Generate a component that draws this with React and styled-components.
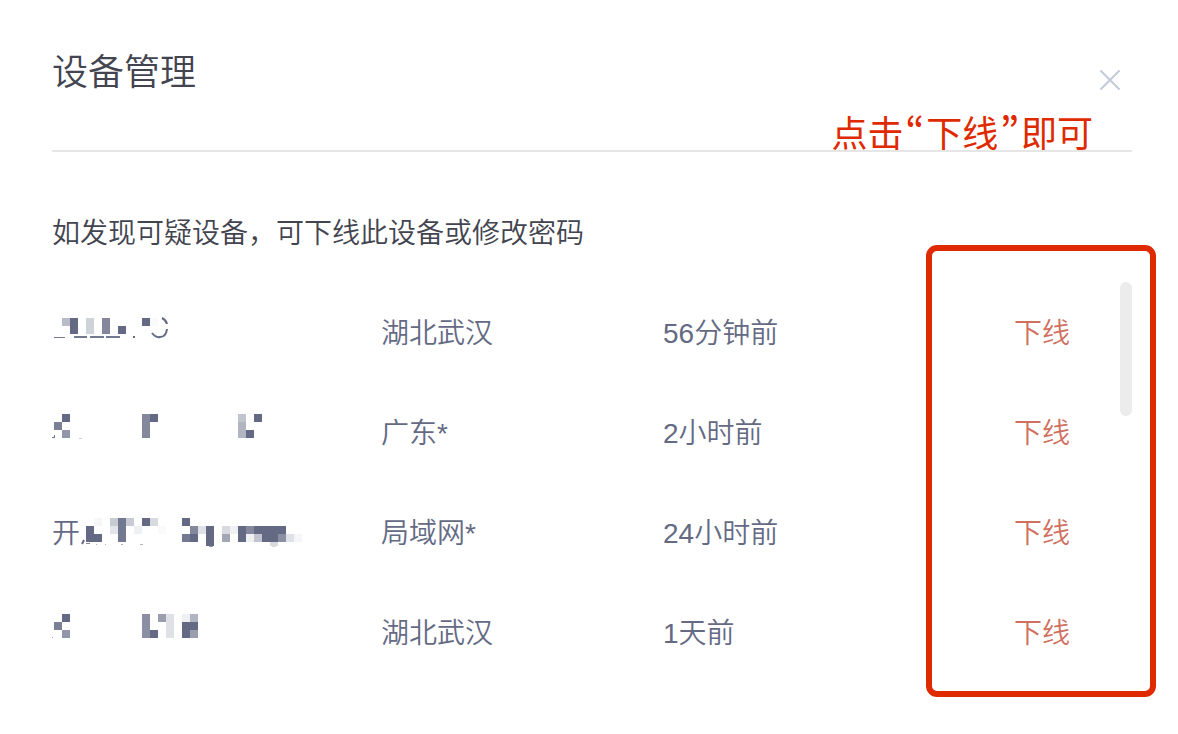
import React from 'react'
import styled, { createGlobalStyle } from 'styled-components'

const colors = {
    INK: '#42444f',
    SLATE: '#646a84',
    CORAL: '#d0705f',
    RED: '#df2a00',
    LINE: '#e6e6e6',
    THUMB: '#ececec',
    CLOSE: '#c3cbd9'
}

const GlobalStyle = createGlobalStyle`
    * {
        box-sizing: border-box;
    }
    body {
        margin: 0;
        background: #fff;
        color: ${colors.INK};
        font-family: "Liberation Sans", "Noto Sans CJK SC", sans-serif;
        font-size: 28px;
        font-weight: 350;
        line-height: 40px;
    }
`

const Dialog = styled.main`
    padding: 48px 46px 52px 52px;
`

const Header = styled.header`
    position: relative;
    display: flex;
    justify-content: space-between;
    align-items: flex-start;
    height: 104px;
    border-bottom: 2px solid ${colors.LINE};
`

const Title = styled.h1`
    margin: 0;
    font-size: 36px;
    font-weight: inherit;
    line-height: 50px;
`

const CloseButton = styled.button`
    display: flex;
    margin-top: 20px;
    padding: 0 10px;
    border: 0;
    background: none;
    cursor: pointer;
`

// note that hangs over the header rule
const Note = styled.p`
    position: absolute;
    right: 39px;
    bottom: -10px;
    margin: 0;
    color: ${colors.RED};
    font-size: 36px;
    font-weight: 400;
    line-height: 50px;
`

const Quote = styled.span`
    padding: 0 2px;
    font-family: "Noto Sans CJK KR", sans-serif;
    font-weight: 500;
`

const Hint = styled.p`
    margin: 62px 0 28px;
`

const DeviceList = styled.section`
    position: relative;
`

const Table = styled.table`
    width: 100%;
    table-layout: fixed;
    border-collapse: collapse;
    color: ${colors.SLATE};
`

const Cell = styled.td`
    width: ${props => props.$width || 'auto'};
    height: 100px;
    padding: 4px 0 0;
    vertical-align: middle;
`

const Device = styled.div`
    position: relative;
    height: 40px;
`

const Mosaic = styled.svg`
    position: absolute;
    top: -2px;
    left: 0;
    display: block;
`

const OfflineButton = styled.button`
    display: block;
    padding: 0;
    border: 0;
    background: none;
    color: ${colors.CORAL};
    font: inherit;
    cursor: pointer;
`

const ScrollThumb = styled.div`
    position: absolute;
    top: 0;
    right: 0;
    width: 12px;
    height: 134px;
    border-radius: 6px;
    background: ${colors.THUMB};
`

const Highlight = styled.div`
    position: absolute;
    top: -37px;
    right: -24px;
    bottom: -15px;
    width: 230px;
    border: 6px solid ${colors.RED};
    border-radius: 11px;
    pointer-events: none;
`

// blocks are [x, y, width, height, opacity]
const devices = [
    {
        id: 1,
        place: '湖北武汉',
        time: '56分钟前',
        blocks: [
            [10, 6, 8, 8, 0.45],
            [18, 6, 8, 16, 1],
            [34, 6, 8, 16, 0.3],
            [50, 6, 8, 16, 0.8],
            [66, 14, 8, 8, 1],
            [90, 6, 8, 8, 1],
            [98, 6, 8, 8, 0.03],
            [2, 25, 11, 1, 0.9],
            [22, 24, 13, 2, 0.9],
            [38, 24, 14, 2, 0.9],
            [54, 24, 14, 2, 0.9],
            [81, 24, 2, 2, 1]
        ],
        curve: 'M110 6q4 2 5 6M100 21q4 5 8 4q6 0 7-8'
    },
    {
        id: 2,
        place: '广东*',
        time: '2小时前',
        blocks: [
            [10, 2, 8, 8, 1],
            [2, 10, 8, 8, 0.85],
            [10, 18, 8, 8, 0.7],
            [0, 25, 3, 1, 0.9],
            [2, 23, 1, 2, 0.9],
            [27, 26, 3, 1, 0.3],
            [90, 2, 8, 24, 0.8],
            [98, 2, 8, 8, 1],
            [186, 2, 8, 8, 0.4],
            [186, 10, 8, 16, 0.5],
            [194, 18, 8, 8, 1],
            [202, 2, 8, 8, 1]
        ]
    },
    {
        id: 3,
        prefix: '开',
        place: '局域网*',
        time: '24小时前',
        blocks: [
            [34, 14, 8, 16, 1],
            [42, 22, 8, 8, 1],
            [42, 6, 8, 8, 0.06],
            [58, 6, 8, 8, 0.35],
            [58, 14, 8, 8, 0.18],
            [66, 6, 8, 24, 0.9],
            [74, 6, 8, 8, 0.35],
            [82, 14, 8, 8, 0.1],
            [90, 6, 8, 8, 1],
            [98, 6, 8, 8, 0.25],
            [106, 14, 8, 8, 0.03],
            [130, 6, 8, 8, 1],
            [130, 22, 8, 8, 0.9],
            [138, 14, 8, 8, 0.8],
            [138, 22, 8, 8, 1],
            [146, 14, 8, 8, 0.2],
            [154, 14, 8, 20, 1],
            [157, 34, 4, 1, 0.7],
            [170, 14, 8, 8, 0.25],
            [170, 22, 8, 8, 0.6],
            [178, 14, 8, 8, 0.1],
            [186, 14, 8, 16, 1],
            [194, 14, 8, 8, 0.8],
            [194, 22, 8, 8, 0.1],
            [202, 14, 32, 8, 1],
            [202, 22, 8, 8, 0.4],
            [210, 22, 16, 8, 1],
            [226, 22, 8, 8, 0.75],
            [234, 22, 8, 8, 0.2],
            [242, 22, 8, 8, 0.06],
            [218, 30, 8, 4, 0.25],
            [220, 34, 4, 1, 0.25],
            [34, 31, 4, 1, 0.8],
            [44, 32, 1, 1, 0.5],
            [53, 32, 1, 1, 0.5],
            [69, 32, 2, 1, 0.5],
            [88, 32, 3, 1, 0.5]
        ],
        curve: 'M32 28l-2 4'
    },
    {
        id: 4,
        place: '湖北武汉',
        time: '1天前',
        blocks: [
            [10, 2, 8, 8, 1],
            [2, 10, 8, 8, 0.85],
            [10, 18, 8, 8, 0.7],
            [0, 25, 1, 1, 0.6],
            [90, 2, 8, 24, 0.75],
            [98, 18, 8, 8, 1],
            [106, 2, 8, 8, 0.65],
            [114, 2, 8, 24, 0.2],
            [130, 2, 8, 8, 0.1],
            [138, 2, 8, 8, 0.5],
            [130, 10, 16, 8, 1],
            [130, 18, 8, 8, 1],
            [138, 18, 8, 8, 0.65]
        ]
    }
]

const DeviceName = ({ prefix, blocks, curve }) => (
    <Device>
        {prefix}
        <Mosaic width="260" height="40" fill={colors.SLATE} aria-hidden="true">
            {blocks.map(([x, y, width, height, opacity]) => (
                <rect
                    key={`${x}-${y}`}
                    x={x}
                    y={y}
                    width={width}
                    height={height}
                    opacity={opacity}
                />
            ))}
            {curve && (
                <path
                    d={curve}
                    fill="none"
                    stroke={colors.SLATE}
                    strokeWidth="2"
                />
            )}
        </Mosaic>
    </Device>
)

const App = () => {
    return (
        <>
            <GlobalStyle />
            <Dialog lang="zh-CN">
                <Header>
                    <Title>设备管理</Title>
                    <CloseButton type="button" aria-label="关闭">
                        <svg
                            width="24"
                            height="24"
                            stroke={colors.CLOSE}
                            strokeWidth="2"
                        >
                            <path d="M2.5 2.5l19 19M21.5 2.5l-19 19" />
                        </svg>
                    </CloseButton>
                    {/* the Korean face has the narrow curly quotes */}
                    <Note>
                        点击<Quote lang="ko">“</Quote>下线
                        <Quote lang="ko">”</Quote>即可
                    </Note>
                </Header>
                <Hint>如发现可疑设备，可下线此设备或修改密码</Hint>
                <DeviceList>
                    <Table>
                        <tbody>
                            {devices.map(device => (
                                <tr key={device.id}>
                                    <Cell $width="329px">
                                        <DeviceName
                                            prefix={device.prefix}
                                            blocks={device.blocks}
                                            curve={device.curve}
                                        />
                                    </Cell>
                                    <Cell $width="282px">{device.place}</Cell>
                                    <Cell>{device.time}</Cell>
                                    <Cell $width="118px">
                                        <OfflineButton type="button">
                                            下线
                                        </OfflineButton>
                                    </Cell>
                                </tr>
                            ))}
                        </tbody>
                    </Table>
                    <ScrollThumb />
                    <Highlight />
                </DeviceList>
            </Dialog>
        </>
    )
}

export default App
